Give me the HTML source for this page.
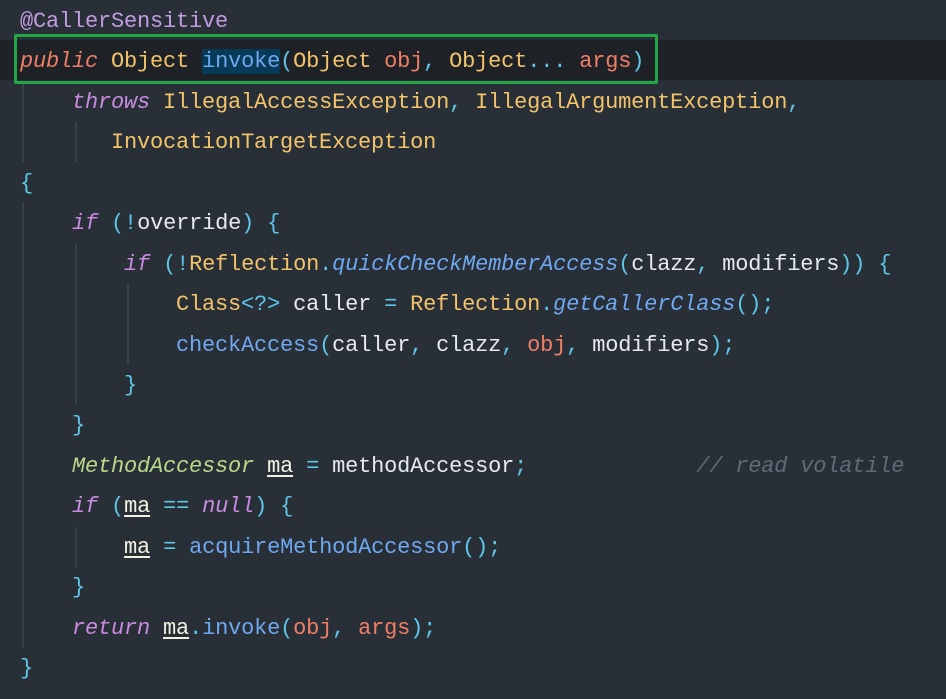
<!DOCTYPE html>
<html><head><meta charset="utf-8"><style>
html,body{margin:0;padding:0;background:#282f37;width:946px;height:699px;overflow:hidden}
pre{margin:0;position:absolute;left:20px;top:2px;font-family:"Liberation Mono",monospace;font-size:22px;letter-spacing:-0.2px;line-height:40.44px;color:#e6eaee}
.hl{position:absolute;left:0;top:40px;width:946px;height:40px;background:#1e2227}
.box{position:absolute;left:14px;top:34px;width:638px;height:44px;border:3px solid #22a645;border-radius:2px}
.g{position:absolute;width:2px;background:#36404a}
.k{color:#c88be0;font-style:italic}
.pub{color:#f07e66;font-style:italic}
.t{color:#f2c36b}
.f{color:#6fa8f0}
.fi{color:#6fa8f0;font-style:italic}
.p{color:#f07e66}
.c{color:#5f6b78;font-style:italic}
.pu{color:#5ec6e8}
.an{color:#c39be0}
.gr{color:#b8d98a;font-style:italic}
.u{text-decoration:underline;text-underline-offset:3px;color:#f2f2e0}
.sel{background:#063a57}
</style></head><body>
<div class="hl"></div>
<div class="g" style="left:22px;top:82px;height:80px"></div>
<div class="g" style="left:75px;top:122px;height:40px"></div>
<div class="g" style="left:22px;top:202px;height:446px"></div>
<div class="g" style="left:75px;top:244px;height:160px"></div>
<div class="g" style="left:127px;top:284px;height:80px"></div>
<div class="g" style="left:75px;top:527px;height:40px"></div>
<pre><span class="an">@CallerSensitive</span>
<span class="pub">public</span> <span class="t">Object</span> <span class="f sel">invoke</span><span class="pu">(</span><span class="t">Object</span> <span class="p">obj</span><span class="pu">,</span> <span class="t">Object</span><span class="pu">...</span> <span class="p">args</span><span class="pu">)</span>
    <span class="k">throws</span> <span class="t">IllegalAccessException</span><span class="pu">,</span> <span class="t">IllegalArgumentException</span><span class="pu">,</span>
       <span class="t">InvocationTargetException</span>
<span class="pu">{</span>
    <span class="k">if</span> <span class="pu">(!</span>override<span class="pu">) {</span>
        <span class="k">if</span> <span class="pu">(!</span><span class="t">Reflection</span><span class="pu">.</span><span class="fi">quickCheckMemberAccess</span><span class="pu">(</span>clazz<span class="pu">,</span> modifiers<span class="pu">)) {</span>
            <span class="t">Class</span><span class="pu">&lt;?&gt;</span> caller <span class="pu">=</span> <span class="t">Reflection</span><span class="pu">.</span><span class="fi">getCallerClass</span><span class="pu">();</span>
            <span class="f">checkAccess</span><span class="pu">(</span>caller<span class="pu">,</span> clazz<span class="pu">,</span> <span class="p">obj</span><span class="pu">,</span> modifiers<span class="pu">);</span>
        <span class="pu">}</span>
    <span class="pu">}</span>
    <span class="gr">MethodAccessor</span> <span class="u">ma</span> <span class="pu">=</span> methodAccessor<span class="pu">;</span>             <span class="c">// read volatile</span>
    <span class="k">if</span> <span class="pu">(</span><span class="u">ma</span> <span class="pu">==</span> <span class="k">null</span><span class="pu">) {</span>
        <span class="u">ma</span> <span class="pu">=</span> <span class="f">acquireMethodAccessor</span><span class="pu">();</span>
    <span class="pu">}</span>
    <span class="k">return</span> <span class="u">ma</span><span class="pu">.</span><span class="f">invoke</span><span class="pu">(</span><span class="p">obj</span><span class="pu">,</span> <span class="p">args</span><span class="pu">);</span>
<span class="pu">}</span></pre>
<div class="box"></div>
</body></html>
